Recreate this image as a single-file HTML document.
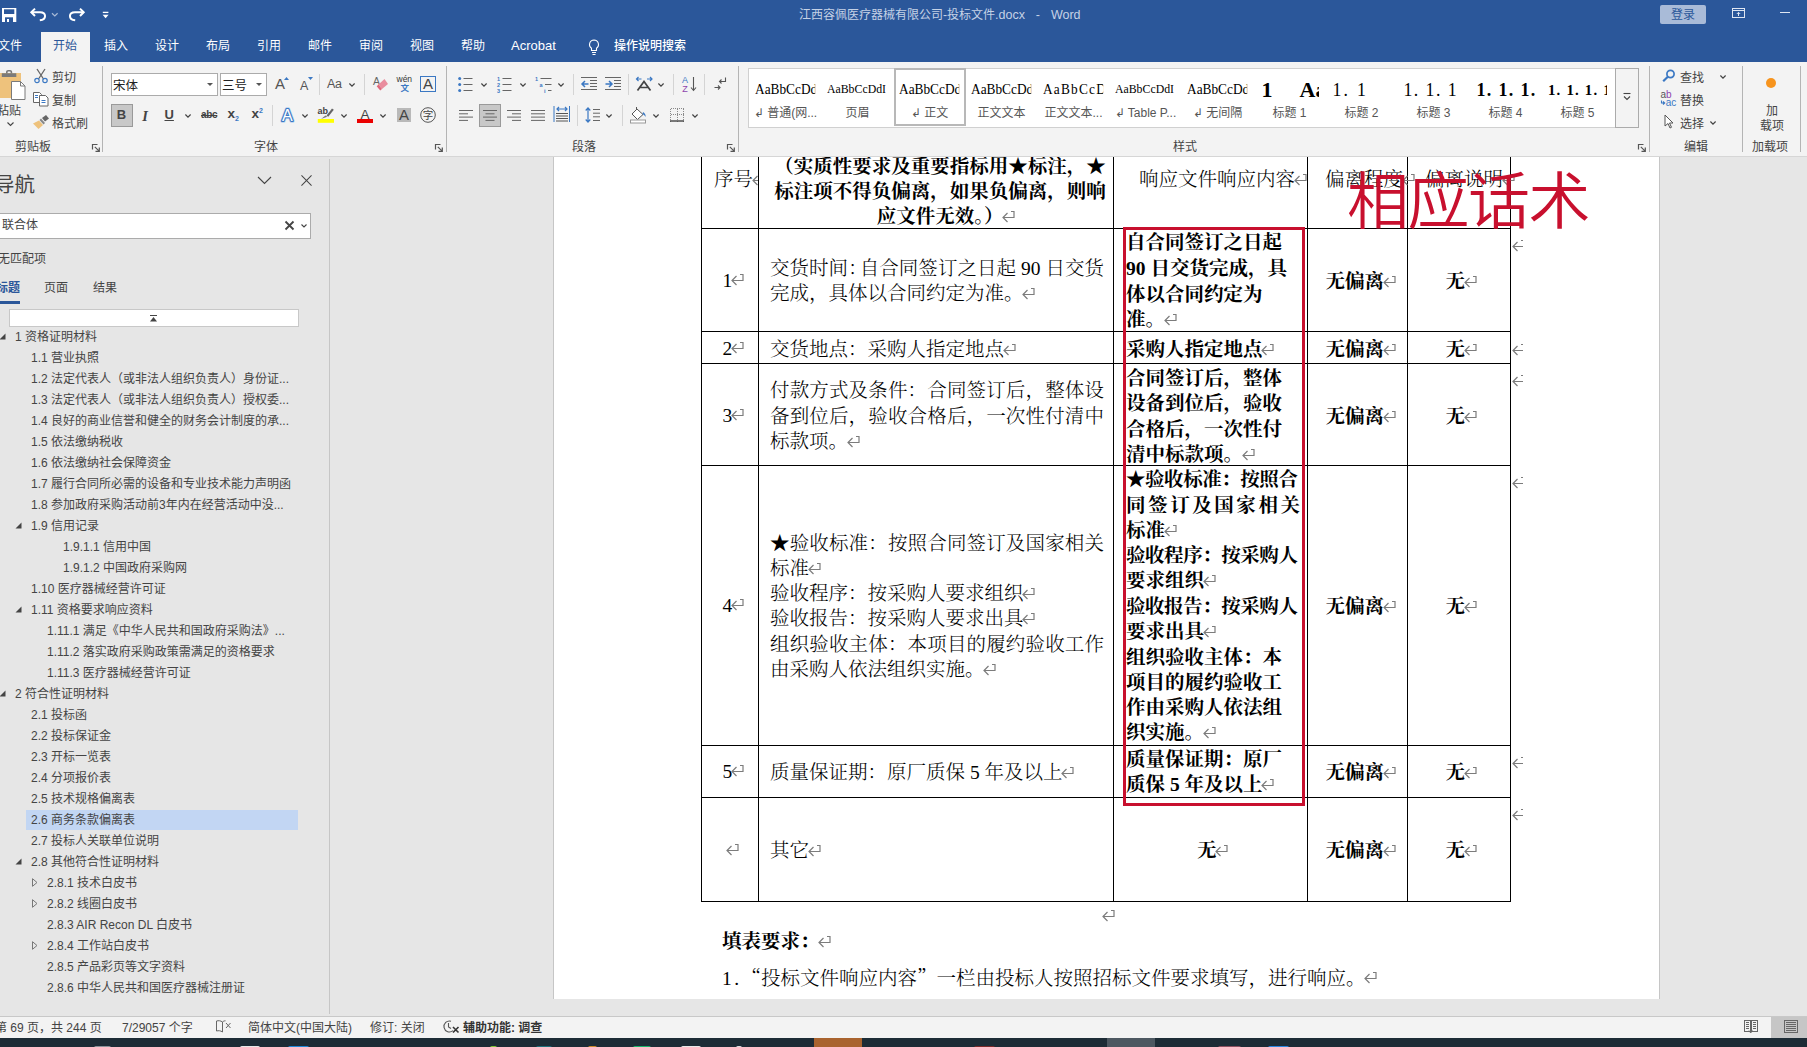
<!DOCTYPE html>
<html lang="zh-CN"><head><meta charset="utf-8"><title>Word</title>
<style>
*{box-sizing:border-box;margin:0;padding:0}
html,body{width:1807px;height:1047px;overflow:hidden;background:#e6e6e6}
body{position:relative;font-family:"Liberation Sans","Noto Sans CJK SC",sans-serif;font-size:12px;color:#444;}
.a{position:absolute;white-space:nowrap}
.t{position:absolute;white-space:nowrap;line-height:22px;height:20px}
#title{left:0;top:0;width:1807px;height:62px;background:#2b579a}
.tab{color:#fff;font-size:12px;top:35px}
#ribbon{left:0;top:62px;width:1807px;height:95px;background:#f3f3f3;border-bottom:1px solid #d6d6d6}
.rl{color:#444;font-size:12px;margin-top:1px}
.sep{position:absolute;width:1px;background:#b4b4b4}
.sep2{position:absolute;width:1px;background:#d4d4d4}
svg{position:absolute;overflow:visible}
.nav{font-size:12px;color:#444}
.doc{font-family:"Liberation Serif","Noto Serif CJK SC",serif;color:#000;font-weight:300;font-size:19.5px;line-height:26px;height:26px;position:absolute;white-space:nowrap}
.b{font-weight:700}
.pm{position:static;display:inline-block;vertical-align:0.500px;margin-left:-1.500px}
.hl{position:absolute;background:#000;height:1px}
.vl{position:absolute;background:#000;width:1px}
</style></head><body>

<div class="a" id="title"></div>
<svg style="left:0;top:0" width="120" height="30" viewBox="0 0 120 30" fill="none" stroke="#fff" stroke-width="2">
<rect x="2" y="8" width="14.300" height="14" fill="#fff" stroke="none"/><rect x="4" y="9.300" width="10.300" height="4.700" fill="#2b579a" stroke="none"/><rect x="5" y="17.300" width="8" height="4.700" fill="#2b579a" stroke="none"/><rect x="7" y="19" width="2" height="3" fill="#fff" stroke="none"/>
<path d="M31.500 12.300H40C46.500 12.300 47 19.500 39.800 20.300"/><path d="M35 8.600l-3.700 3.700l3.700 3.700"/>
<path d="M52 13.300l2.800 2.700l2.800-2.700" stroke="#a9bbd8" stroke-width="1.200"/>
<path d="M83.500 12.300H75C68.500 12.300 68 19.500 75.200 20.300"/><path d="M80 8.600l3.700 3.700l-3.700 3.700"/>
<path d="M102.800 12.400h5.600" stroke-width="1.300"/><path d="M102.600 14.800h6l-3 3.400z" fill="#fff" stroke="none"/>
</svg>
<div class="t" style="left:799px;top:4px;color:#c5d2e6;font-size:12px">江西容佩医疗器械有限公司-投标文件<span style="font-size:12.500px;word-spacing:2px">.docx&nbsp; - &nbsp;Word</span></div>
<div class="a" style="left:1660px;top:5px;width:46px;height:19px;border-radius:2px;background:#a9bbd8"></div>
<div class="t" style="left:1660px;top:4px;width:46px;text-align:center;color:#2b579a;font-size:12px">登录</div>
<svg style="left:1732px;top:8px" width="13" height="10" viewBox="0 0 13 10" fill="none" stroke="#dfe6f2" stroke-width="1"><path d="M0.500 0.500h12v9h-12z M0.500 2.500h12" shape-rendering="crispEdges"/><path d="M6.500 8v-3.500 M4.800 6l1.700-1.700l1.700 1.700"/></svg>
<div class="a" style="left:1780px;top:12px;width:10px;height:1px;background:#dfe6f2"></div>
<div class="a" style="left:41px;top:32px;width:49px;height:30px;background:#f3f3f3"></div>
<div class="t tab" style="left:-2px;color:#fff">文件</div>
<div class="t tab" style="left:53px;color:#2b579a">开始</div>
<div class="t tab" style="left:104px;color:#fff">插入</div>
<div class="t tab" style="left:155px;color:#fff">设计</div>
<div class="t tab" style="left:206px;color:#fff">布局</div>
<div class="t tab" style="left:257px;color:#fff">引用</div>
<div class="t tab" style="left:308px;color:#fff">邮件</div>
<div class="t tab" style="left:359px;color:#fff">审阅</div>
<div class="t tab" style="left:410px;color:#fff">视图</div>
<div class="t tab" style="left:461px;color:#fff">帮助</div>
<div class="t tab" style="left:511px;color:#fff"><span style="font-size:13px">Acrobat</span></div>
<svg style="left:588px;top:39px" width="12" height="17" viewBox="0 0 12 17" fill="none" stroke="#fff" stroke-width="1.1"><path d="M6 1a4.500 4.500 0 0 0-2.500 8.200v2.300h5v-2.300a4.500 4.500 0 0 0-2.500-8.200z M4 13.500h4 M4.500 15.500h3"/></svg>
<div class="t tab" style="left:614px;font-weight:500">操作说明搜索</div><div class="a" style="left:553px;top:157px;width:1107px;height:842px;background:#fff;border-left:1px solid #c6c6c6;border-right:1px solid #c6c6c6"></div>
<div class="vl" style="left:701px;top:157px;height:745px"></div>
<div class="vl" style="left:758px;top:157px;height:745px"></div>
<div class="vl" style="left:1113px;top:157px;height:745px"></div>
<div class="vl" style="left:1307px;top:157px;height:745px"></div>
<div class="vl" style="left:1407px;top:157px;height:745px"></div>
<div class="vl" style="left:1510px;top:157px;height:745px"></div>
<div class="hl" style="left:701px;top:228px;width:810px"></div>
<div class="hl" style="left:701px;top:331px;width:810px"></div>
<div class="hl" style="left:701px;top:363px;width:810px"></div>
<div class="hl" style="left:701px;top:465px;width:810px"></div>
<div class="hl" style="left:701px;top:745px;width:810px"></div>
<div class="hl" style="left:701px;top:797px;width:810px"></div>
<div class="hl" style="left:701px;top:901px;width:810px"></div>
<div class="doc" style="left:714px;top:167px;width:44px;overflow:hidden">序号<svg class="pm" width="13" height="12" viewBox="0 0 13 12" fill="none" stroke="#7c7c7c" stroke-width="1.200"><path d="M9 0.500h3v6h-11"/><path d="M5.500 2l-4.500 4.500l4.500 4.500"/></svg></div>
<div class="doc b" style="left:763px;top:154px;width:354px;text-align:center;">（实质性要求及重要指标用★标注，★</div>
<div class="doc b" style="left:763px;top:179px;width:354px;text-align:center;">标注项不得负偏离，如果负偏离，则响</div>
<div class="doc b" style="left:769px;top:204px;width:354px;text-align:center;">应文件无效。）<svg class="pm" width="13" height="12" viewBox="0 0 13 12" fill="none" stroke="#7c7c7c" stroke-width="1.200"><path d="M9 0.500h3v6h-11"/><path d="M5.500 2l-4.500 4.500l4.500 4.500"/></svg></div>
<div class="doc" style="left:1139px;top:167px;">响应文件响应内容<svg class="pm" width="13" height="12" viewBox="0 0 13 12" fill="none" stroke="#7c7c7c" stroke-width="1.200"><path d="M9 0.500h3v6h-11"/><path d="M5.500 2l-4.500 4.500l4.500 4.500"/></svg></div>
<div class="doc" style="left:1325px;top:167px;">偏离程度<svg class="pm" width="13" height="12" viewBox="0 0 13 12" fill="none" stroke="#7c7c7c" stroke-width="1.200"><path d="M9 0.500h3v6h-11"/><path d="M5.500 2l-4.500 4.500l4.500 4.500"/></svg></div>
<div class="doc" style="left:1425px;top:167px;">偏离说明<svg class="pm" width="13" height="12" viewBox="0 0 13 12" fill="none" stroke="#7c7c7c" stroke-width="1.200"><path d="M9 0.500h3v6h-11"/><path d="M5.500 2l-4.500 4.500l4.500 4.500"/></svg></div>
<div class="doc" style="left:705px;top:267.5px;width:56px;text-align:center;">1<svg class="pm" width="13" height="12" viewBox="0 0 13 12" fill="none" stroke="#7c7c7c" stroke-width="1.200"><path d="M9 0.500h3v6h-11"/><path d="M5.500 2l-4.500 4.500l4.500 4.500"/></svg></div>
<div class="doc" style="left:705px;top:335.5px;width:56px;text-align:center;">2<svg class="pm" width="13" height="12" viewBox="0 0 13 12" fill="none" stroke="#7c7c7c" stroke-width="1.200"><path d="M9 0.500h3v6h-11"/><path d="M5.500 2l-4.500 4.500l4.500 4.500"/></svg></div>
<div class="doc" style="left:705px;top:402.5px;width:56px;text-align:center;">3<svg class="pm" width="13" height="12" viewBox="0 0 13 12" fill="none" stroke="#7c7c7c" stroke-width="1.200"><path d="M9 0.500h3v6h-11"/><path d="M5.500 2l-4.500 4.500l4.500 4.500"/></svg></div>
<div class="doc" style="left:705px;top:592.5px;width:56px;text-align:center;">4<svg class="pm" width="13" height="12" viewBox="0 0 13 12" fill="none" stroke="#7c7c7c" stroke-width="1.200"><path d="M9 0.500h3v6h-11"/><path d="M5.500 2l-4.500 4.500l4.500 4.500"/></svg></div>
<div class="doc" style="left:705px;top:758.5px;width:56px;text-align:center;">5<svg class="pm" width="13" height="12" viewBox="0 0 13 12" fill="none" stroke="#7c7c7c" stroke-width="1.200"><path d="M9 0.500h3v6h-11"/><path d="M5.500 2l-4.500 4.500l4.500 4.500"/></svg></div>
<div class="doc" style="left:705px;top:837px;width:56px;text-align:center;"><svg class="pm" width="13" height="12" viewBox="0 0 13 12" fill="none" stroke="#7c7c7c" stroke-width="1.200"><path d="M9 0.500h3v6h-11"/><path d="M5.500 2l-4.500 4.500l4.500 4.500"/></svg></div>
<div class="doc" style="left:770px;top:256px;width:334px;text-align:justify;text-align-last:justify;">交货时间<span style="margin-right:-8px">：</span>自合同签订之日起 90 日交货</div>
<div class="doc" style="left:770px;top:281px;">完成，具体以合同约定为准。<svg class="pm" width="13" height="12" viewBox="0 0 13 12" fill="none" stroke="#7c7c7c" stroke-width="1.200"><path d="M9 0.500h3v6h-11"/><path d="M5.500 2l-4.500 4.500l4.500 4.500"/></svg></div>
<div class="doc" style="left:770px;top:337px;">交货地点：采购人指定地点<svg class="pm" width="13" height="12" viewBox="0 0 13 12" fill="none" stroke="#7c7c7c" stroke-width="1.200"><path d="M9 0.500h3v6h-11"/><path d="M5.500 2l-4.500 4.500l4.500 4.500"/></svg></div>
<div class="doc" style="left:770px;top:378px;width:334px;text-align:justify;text-align-last:justify;">付款方式及条件：合同签订后，整体设</div>
<div class="doc" style="left:770px;top:404px;width:334px;text-align:justify;text-align-last:justify;">备到位后，验收合格后，一次性付清中</div>
<div class="doc" style="left:770px;top:429px;">标款项。<svg class="pm" width="13" height="12" viewBox="0 0 13 12" fill="none" stroke="#7c7c7c" stroke-width="1.200"><path d="M9 0.500h3v6h-11"/><path d="M5.500 2l-4.500 4.500l4.500 4.500"/></svg></div>
<div class="doc" style="left:770px;top:531px;width:334px;text-align:justify;text-align-last:justify;">★验收标准：按照合同签订及国家相关</div>
<div class="doc" style="left:770px;top:556px;">标准<svg class="pm" width="13" height="12" viewBox="0 0 13 12" fill="none" stroke="#7c7c7c" stroke-width="1.200"><path d="M9 0.500h3v6h-11"/><path d="M5.500 2l-4.500 4.500l4.500 4.500"/></svg></div>
<div class="doc" style="left:770px;top:581px;">验收程序：按采购人要求组织<svg class="pm" width="13" height="12" viewBox="0 0 13 12" fill="none" stroke="#7c7c7c" stroke-width="1.200"><path d="M9 0.500h3v6h-11"/><path d="M5.500 2l-4.500 4.500l4.500 4.500"/></svg></div>
<div class="doc" style="left:770px;top:606px;">验收报告：按采购人要求出具<svg class="pm" width="13" height="12" viewBox="0 0 13 12" fill="none" stroke="#7c7c7c" stroke-width="1.200"><path d="M9 0.500h3v6h-11"/><path d="M5.500 2l-4.500 4.500l4.500 4.500"/></svg></div>
<div class="doc" style="left:770px;top:632px;width:334px;text-align:justify;text-align-last:justify;">组织验收主体：本项目的履约验收工作</div>
<div class="doc" style="left:770px;top:657px;">由采购人依法组织实施。<svg class="pm" width="13" height="12" viewBox="0 0 13 12" fill="none" stroke="#7c7c7c" stroke-width="1.200"><path d="M9 0.500h3v6h-11"/><path d="M5.500 2l-4.500 4.500l4.500 4.500"/></svg></div>
<div class="doc" style="left:770px;top:760px;">质量保证期：原厂质保 5 年及以上<svg class="pm" width="13" height="12" viewBox="0 0 13 12" fill="none" stroke="#7c7c7c" stroke-width="1.200"><path d="M9 0.500h3v6h-11"/><path d="M5.500 2l-4.500 4.500l4.500 4.500"/></svg></div>
<div class="doc" style="left:770px;top:838px;">其它<svg class="pm" width="13" height="12" viewBox="0 0 13 12" fill="none" stroke="#7c7c7c" stroke-width="1.200"><path d="M9 0.500h3v6h-11"/><path d="M5.500 2l-4.500 4.500l4.500 4.500"/></svg></div>
<div class="doc b" style="left:1126px;top:230px;">自合同签订之日起</div>
<div class="doc b" style="left:1126px;top:256px;">90 日交货完成，具</div>
<div class="doc b" style="left:1126px;top:282px;">体以合同约定为</div>
<div class="doc b" style="left:1126px;top:307px;">准。<svg class="pm" width="13" height="12" viewBox="0 0 13 12" fill="none" stroke="#7c7c7c" stroke-width="1.200"><path d="M9 0.500h3v6h-11"/><path d="M5.500 2l-4.500 4.500l4.500 4.500"/></svg></div>
<div class="doc b" style="left:1126px;top:337px;">采购人指定地点<svg class="pm" width="13" height="12" viewBox="0 0 13 12" fill="none" stroke="#7c7c7c" stroke-width="1.200"><path d="M9 0.500h3v6h-11"/><path d="M5.500 2l-4.500 4.500l4.500 4.500"/></svg></div>
<div class="doc b" style="left:1126px;top:366px;">合同签订后，整体</div>
<div class="doc b" style="left:1126px;top:391px;">设备到位后，验收</div>
<div class="doc b" style="left:1126px;top:417px;">合格后，一次性付</div>
<div class="doc b" style="left:1126px;top:442px;">清中标款项。<svg class="pm" width="13" height="12" viewBox="0 0 13 12" fill="none" stroke="#7c7c7c" stroke-width="1.200"><path d="M9 0.500h3v6h-11"/><path d="M5.500 2l-4.500 4.500l4.500 4.500"/></svg></div>
<div class="doc b" style="left:1126px;top:467px;letter-spacing:-0.45px;">★验收标准：按照合</div>
<div class="doc b" style="left:1126px;top:493px;width:174px;text-align:justify;text-align-last:justify;">同签订及国家相关</div>
<div class="doc b" style="left:1126px;top:518px;">标准<svg class="pm" width="13" height="12" viewBox="0 0 13 12" fill="none" stroke="#7c7c7c" stroke-width="1.200"><path d="M9 0.500h3v6h-11"/><path d="M5.500 2l-4.500 4.500l4.500 4.500"/></svg></div>
<div class="doc b" style="left:1126px;top:543px;letter-spacing:-0.45px;">验收程序：按采购人</div>
<div class="doc b" style="left:1126px;top:568px;">要求组织<svg class="pm" width="13" height="12" viewBox="0 0 13 12" fill="none" stroke="#7c7c7c" stroke-width="1.200"><path d="M9 0.500h3v6h-11"/><path d="M5.500 2l-4.500 4.500l4.500 4.500"/></svg></div>
<div class="doc b" style="left:1126px;top:594px;letter-spacing:-0.45px;">验收报告：按采购人</div>
<div class="doc b" style="left:1126px;top:619px;">要求出具<svg class="pm" width="13" height="12" viewBox="0 0 13 12" fill="none" stroke="#7c7c7c" stroke-width="1.200"><path d="M9 0.500h3v6h-11"/><path d="M5.500 2l-4.500 4.500l4.500 4.500"/></svg></div>
<div class="doc b" style="left:1126px;top:645px;">组织验收主体：本</div>
<div class="doc b" style="left:1126px;top:670px;">项目的履约验收工</div>
<div class="doc b" style="left:1126px;top:695px;">作由采购人依法组</div>
<div class="doc b" style="left:1126px;top:720px;">织实施。<svg class="pm" width="13" height="12" viewBox="0 0 13 12" fill="none" stroke="#7c7c7c" stroke-width="1.200"><path d="M9 0.500h3v6h-11"/><path d="M5.500 2l-4.500 4.500l4.500 4.500"/></svg></div>
<div class="doc b" style="left:1126px;top:747px;">质量保证期：原厂</div>
<div class="doc b" style="left:1126px;top:772px;">质保 5 年及以上<svg class="pm" width="13" height="12" viewBox="0 0 13 12" fill="none" stroke="#7c7c7c" stroke-width="1.200"><path d="M9 0.500h3v6h-11"/><path d="M5.500 2l-4.500 4.500l4.500 4.500"/></svg></div>
<div class="doc b" style="left:1116px;top:838px;width:193px;text-align:center;">无<svg class="pm" width="13" height="12" viewBox="0 0 13 12" fill="none" stroke="#7c7c7c" stroke-width="1.200"><path d="M9 0.500h3v6h-11"/><path d="M5.500 2l-4.500 4.500l4.500 4.500"/></svg></div>
<div class="doc b" style="left:1311px;top:269px;width:99px;text-align:center;">无偏离<svg class="pm" width="13" height="12" viewBox="0 0 13 12" fill="none" stroke="#7c7c7c" stroke-width="1.200"><path d="M9 0.500h3v6h-11"/><path d="M5.500 2l-4.500 4.500l4.500 4.500"/></svg></div>
<div class="doc b" style="left:1410px;top:269px;width:102px;text-align:center;">无<svg class="pm" width="13" height="12" viewBox="0 0 13 12" fill="none" stroke="#7c7c7c" stroke-width="1.200"><path d="M9 0.500h3v6h-11"/><path d="M5.500 2l-4.500 4.500l4.500 4.500"/></svg></div>
<div class="doc b" style="left:1311px;top:337px;width:99px;text-align:center;">无偏离<svg class="pm" width="13" height="12" viewBox="0 0 13 12" fill="none" stroke="#7c7c7c" stroke-width="1.200"><path d="M9 0.500h3v6h-11"/><path d="M5.500 2l-4.500 4.500l4.500 4.500"/></svg></div>
<div class="doc b" style="left:1410px;top:337px;width:102px;text-align:center;">无<svg class="pm" width="13" height="12" viewBox="0 0 13 12" fill="none" stroke="#7c7c7c" stroke-width="1.200"><path d="M9 0.500h3v6h-11"/><path d="M5.500 2l-4.500 4.500l4.500 4.500"/></svg></div>
<div class="doc b" style="left:1311px;top:404px;width:99px;text-align:center;">无偏离<svg class="pm" width="13" height="12" viewBox="0 0 13 12" fill="none" stroke="#7c7c7c" stroke-width="1.200"><path d="M9 0.500h3v6h-11"/><path d="M5.500 2l-4.500 4.500l4.500 4.500"/></svg></div>
<div class="doc b" style="left:1410px;top:404px;width:102px;text-align:center;">无<svg class="pm" width="13" height="12" viewBox="0 0 13 12" fill="none" stroke="#7c7c7c" stroke-width="1.200"><path d="M9 0.500h3v6h-11"/><path d="M5.500 2l-4.500 4.500l4.500 4.500"/></svg></div>
<div class="doc b" style="left:1311px;top:594px;width:99px;text-align:center;">无偏离<svg class="pm" width="13" height="12" viewBox="0 0 13 12" fill="none" stroke="#7c7c7c" stroke-width="1.200"><path d="M9 0.500h3v6h-11"/><path d="M5.500 2l-4.500 4.500l4.500 4.500"/></svg></div>
<div class="doc b" style="left:1410px;top:594px;width:102px;text-align:center;">无<svg class="pm" width="13" height="12" viewBox="0 0 13 12" fill="none" stroke="#7c7c7c" stroke-width="1.200"><path d="M9 0.500h3v6h-11"/><path d="M5.500 2l-4.500 4.500l4.500 4.500"/></svg></div>
<div class="doc b" style="left:1311px;top:760px;width:99px;text-align:center;">无偏离<svg class="pm" width="13" height="12" viewBox="0 0 13 12" fill="none" stroke="#7c7c7c" stroke-width="1.200"><path d="M9 0.500h3v6h-11"/><path d="M5.500 2l-4.500 4.500l4.500 4.500"/></svg></div>
<div class="doc b" style="left:1410px;top:760px;width:102px;text-align:center;">无<svg class="pm" width="13" height="12" viewBox="0 0 13 12" fill="none" stroke="#7c7c7c" stroke-width="1.200"><path d="M9 0.500h3v6h-11"/><path d="M5.500 2l-4.500 4.500l4.500 4.500"/></svg></div>
<div class="doc b" style="left:1311px;top:838px;width:99px;text-align:center;">无偏离<svg class="pm" width="13" height="12" viewBox="0 0 13 12" fill="none" stroke="#7c7c7c" stroke-width="1.200"><path d="M9 0.500h3v6h-11"/><path d="M5.500 2l-4.500 4.500l4.500 4.500"/></svg></div>
<div class="doc b" style="left:1410px;top:838px;width:102px;text-align:center;">无<svg class="pm" width="13" height="12" viewBox="0 0 13 12" fill="none" stroke="#7c7c7c" stroke-width="1.200"><path d="M9 0.500h3v6h-11"/><path d="M5.500 2l-4.500 4.500l4.500 4.500"/></svg></div>
<div class="doc" style="left:1512px;top:233px;width:11px;padding-left:1.500px;overflow:hidden"><svg class="pm" width="13" height="12" viewBox="0 0 13 12" fill="none" stroke="#7c7c7c" stroke-width="1.200"><path d="M9 0.500h3v6h-11"/><path d="M5.500 2l-4.500 4.500l4.500 4.500"/></svg></div>
<div class="doc" style="left:1512px;top:337px;width:11px;padding-left:1.500px;overflow:hidden"><svg class="pm" width="13" height="12" viewBox="0 0 13 12" fill="none" stroke="#7c7c7c" stroke-width="1.200"><path d="M9 0.500h3v6h-11"/><path d="M5.500 2l-4.500 4.500l4.500 4.500"/></svg></div>
<div class="doc" style="left:1512px;top:368px;width:11px;padding-left:1.500px;overflow:hidden"><svg class="pm" width="13" height="12" viewBox="0 0 13 12" fill="none" stroke="#7c7c7c" stroke-width="1.200"><path d="M9 0.500h3v6h-11"/><path d="M5.500 2l-4.500 4.500l4.500 4.500"/></svg></div>
<div class="doc" style="left:1512px;top:470px;width:11px;padding-left:1.500px;overflow:hidden"><svg class="pm" width="13" height="12" viewBox="0 0 13 12" fill="none" stroke="#7c7c7c" stroke-width="1.200"><path d="M9 0.500h3v6h-11"/><path d="M5.500 2l-4.500 4.500l4.500 4.500"/></svg></div>
<div class="doc" style="left:1512px;top:750px;width:11px;padding-left:1.500px;overflow:hidden"><svg class="pm" width="13" height="12" viewBox="0 0 13 12" fill="none" stroke="#7c7c7c" stroke-width="1.200"><path d="M9 0.500h3v6h-11"/><path d="M5.500 2l-4.500 4.500l4.500 4.500"/></svg></div>
<div class="doc" style="left:1512px;top:802px;width:11px;padding-left:1.500px;overflow:hidden"><svg class="pm" width="13" height="12" viewBox="0 0 13 12" fill="none" stroke="#7c7c7c" stroke-width="1.200"><path d="M9 0.500h3v6h-11"/><path d="M5.500 2l-4.500 4.500l4.500 4.500"/></svg></div>
<div class="doc" style="left:1103px;top:903px"><svg class="pm" width="13" height="12" viewBox="0 0 13 12" fill="none" stroke="#7c7c7c" stroke-width="1.200"><path d="M9 0.500h3v6h-11"/><path d="M5.500 2l-4.500 4.500l4.500 4.500"/></svg></div>
<div class="doc b" style="left:722px;top:929px;">填表要求：<svg class="pm" width="13" height="12" viewBox="0 0 13 12" fill="none" stroke="#7c7c7c" stroke-width="1.200"><path d="M9 0.500h3v6h-11"/><path d="M5.500 2l-4.500 4.500l4.500 4.500"/></svg></div>
<div class="doc" style="left:722px;top:965.5px;"><span style="letter-spacing:2.400px">1.</span><span style="line-height:0;font-family:'Noto Serif CJK SC',serif">“</span>投标文件响应内容<span style="line-height:0;font-family:'Noto Serif CJK SC',serif">”</span>一栏由投标人按照招标文件要求填写，进行响应。<svg class="pm" width="13" height="12" viewBox="0 0 13 12" fill="none" stroke="#7c7c7c" stroke-width="1.200"><path d="M9 0.500h3v6h-11"/><path d="M5.500 2l-4.500 4.500l4.500 4.500"/></svg></div>
<div class="a" style="left:1123px;top:227px;width:182px;height:579px;border:3px solid #c8102e"></div>
<div class="a" style="left:1347px;top:157px;font-size:62px;letter-spacing:-1.500px;line-height:80px;height:80px;color:#c8102e;font-family:'Noto Sans CJK SC',sans-serif;font-weight:350">相应话术</div><div class="a" id="ribbon"></div>
<div class="sep" style="left:102px;top:66px;height:86px"></div>
<div class="sep" style="left:446px;top:66px;height:86px"></div>
<div class="sep" style="left:738px;top:66px;height:86px"></div>
<div class="sep" style="left:1649px;top:66px;height:86px"></div>
<div class="sep" style="left:1742px;top:66px;height:86px"></div>
<div class="sep" style="left:1800px;top:66px;height:86px"></div>
<div class="t rl" style="left:15px;top:135px">剪贴板</div>
<div class="t rl" style="left:254px;top:135px">字体</div>
<div class="t rl" style="left:572px;top:135px">段落</div>
<div class="t rl" style="left:1173px;top:135px">样式</div>
<div class="t rl" style="left:1684px;top:135px">编辑</div>
<div class="t rl" style="left:1752px;top:135px">加载项</div>
<svg style="left:92px;top:144px" width="8" height="8" viewBox="0 0 8 8" fill="none" stroke="#555" stroke-width="1.200"><path d="M0.500 5.500v-5h5"/><path d="M2.800 2.800l4.400 4.400 M7.300 3.500v3.800h-3.800"/></svg>
<svg style="left:435px;top:144px" width="8" height="8" viewBox="0 0 8 8" fill="none" stroke="#555" stroke-width="1.200"><path d="M0.500 5.500v-5h5"/><path d="M2.800 2.800l4.400 4.400 M7.300 3.500v3.800h-3.800"/></svg>
<svg style="left:727px;top:144px" width="8" height="8" viewBox="0 0 8 8" fill="none" stroke="#555" stroke-width="1.200"><path d="M0.500 5.500v-5h5"/><path d="M2.800 2.800l4.400 4.400 M7.300 3.500v3.800h-3.800"/></svg>
<svg style="left:1638px;top:144px" width="8" height="8" viewBox="0 0 8 8" fill="none" stroke="#555" stroke-width="1.200"><path d="M0.500 5.500v-5h5"/><path d="M2.800 2.800l4.400 4.400 M7.300 3.500v3.800h-3.800"/></svg>
<svg style="left:0;top:69px" width="26" height="32" viewBox="0 0 26 32">
<path d="M-4 4h25v25h-25z" fill="#eec27c"/><path d="M6.800 4.500v-1.500a1.300 1.300 0 0 1 1.300-1.300h2a1.300 1.300 0 0 1 1.300 1.300v1.500" fill="none" stroke="#7a7a7a" stroke-width="1.600"/><path d="M1.800 4.300h14.500v3.700h-14.500z" fill="#7a7a7a"/>
<path d="M11.500 12.500h9l4.500 4.500v13.500h-13.500z" fill="#fff" stroke="#7a7a7a" stroke-width="1"/><path d="M20.500 12.500v4.500h4.500" fill="none" stroke="#7a7a7a" stroke-width="1"/></svg>
<div class="t rl" style="left:-3px;top:99px">粘贴</div>
<svg style="left:7px;top:122px" width="7" height="4" viewBox="0 0 7 4" fill="none" stroke="#444" stroke-width="1.1"><path d="M0.500 0.500l3 3l3-3"/></svg>
<svg style="left:33px;top:68px" width="16" height="16" viewBox="0 0 16 16" fill="none"><path d="M4 1l6.500 10 M12 1l-6.500 10" stroke="#666" stroke-width="1.3"/><circle cx="4" cy="12.500" r="2.200" stroke="#3b78c3" stroke-width="1.200"/><circle cx="12" cy="12.500" r="2.200" stroke="#3b78c3" stroke-width="1.200"/></svg>
<div class="t rl" style="left:52px;top:66px">剪切</div>
<svg style="left:33px;top:91px" width="16" height="16" viewBox="0 0 16 16" fill="#fff" stroke="#666" stroke-width="1"><path d="M0.500 1.500h6l2 2v8h-8z"/><path d="M6.500 4.500h6l2.500 2.500v8h-8.500z"/><path d="M8.500 9.500h4 M8.500 11.500h4 M2 4.500h3 M2 6.500h3" stroke="#3b78c3"/></svg>
<div class="t rl" style="left:52px;top:89px">复制</div>
<svg style="left:33px;top:114px" width="17" height="16" viewBox="0 0 17 16"><path d="M9 4l4-3l3 3.500l-4 3z" fill="#666"/><path d="M8 4.500l4 4.500l-1.500 1.500l-4-4.500z" fill="#888"/><path d="M6 6.500l4 4.500l-4.500 4l-5.500-5.500z" fill="#eec27c"/></svg>
<div class="t rl" style="left:52px;top:112px">格式刷</div>
<div class="a" style="left:111px;top:73px;width:107px;height:23px;background:#fff;border:1px solid #ababab"></div>
<div class="t" style="left:113px;top:75px;font-size:12.500px;color:#222">宋体</div>
<svg style="left:207px;top:83px" width="6" height="3" viewBox="0 0 6 3"><path d="M0 0h6l-3 3z" fill="#555"/></svg>
<div class="a" style="left:220px;top:73px;width:47px;height:23px;background:#fff;border:1px solid #ababab"></div>
<div class="t" style="left:222px;top:75px;font-size:12.500px;color:#222">三号</div>
<svg style="left:256px;top:83px" width="6" height="3" viewBox="0 0 6 3"><path d="M0 0h6l-3 3z" fill="#555"/></svg>
<div class="t" style="left:275px;top:73px;font-size:15px;color:#555">A</div><svg style="left:284px;top:77px" width="5" height="3" viewBox="0 0 5 3"><path d="M0 3h5l-2.500-3z" fill="#3b78c3"/></svg>
<div class="t" style="left:300px;top:75px;font-size:12.500px;color:#555">A</div><svg style="left:308px;top:77px" width="5" height="3" viewBox="0 0 5 3"><path d="M0 0h5l-2.500 3z" fill="#3b78c3"/></svg>
<div class="sep2" style="left:319px;top:74px;height:21px"></div>
<div class="t" style="left:327px;top:73px;font-size:12.500px;letter-spacing:-0.300px;color:#555">Aa</div>
<svg style="left:348.5px;top:83px" width="6" height="4" viewBox="0 0 6 4" fill="none" stroke="#444" stroke-width="1.200"><path d="M0.400 0.500l2.600 2.600l2.600-2.600"/></svg>
<div class="sep2" style="left:364px;top:74px;height:21px"></div>
<svg style="left:372px;top:76px" width="17" height="16" viewBox="0 0 17 16"><text x="1" y="9" font-family="Liberation Sans,sans-serif" font-size="10.500" fill="#666">A</text><path d="M12.500 3l3.500 5l-6 5l-3.500-4.500z" fill="#e98d9e"/><path d="M6.500 8.500l3.500 4.500l-1.800 1.500l-3.500-4.300z" fill="#e0677c"/></svg>
<div class="t" style="left:396.500px;top:73px;font-size:8.500px;color:#333;line-height:12px;height:12px">wén</div><div class="t" style="left:400.500px;top:81px;font-size:8.500px;font-weight:700;color:#3b78c3;line-height:14px;height:14px">文</div>
<div class="a" style="left:420px;top:76px;width:16px;height:16px;border:1px solid #3b78c3"></div><div class="t" style="left:420px;top:73px;width:16px;text-align:center;font-size:15px;color:#444">A</div>
<div class="a" style="left:111px;top:104px;width:22px;height:23px;background:#c8c8c8;border:1px solid #9a9a9a"></div>
<div class="t" style="left:110.500px;top:104px;width:22px;text-align:center;font-size:13px;font-weight:700;color:#444">B</div>
<div class="t" style="left:140px;top:105px;width:10px;text-align:center;font-size:14.500px;font-style:italic;font-weight:700;color:#444;font-family:'Liberation Serif',serif">I</div>
<div class="t" style="left:164.500px;top:104px;font-size:13px;font-weight:700;color:#444;text-decoration:underline">U</div>
<svg style="left:184.5px;top:114px" width="6" height="4" viewBox="0 0 6 4" fill="none" stroke="#444" stroke-width="1.200"><path d="M0.400 0.500l2.600 2.600l2.600-2.600"/></svg>
<div class="t" style="left:201px;top:104px;font-size:10px;font-weight:700;letter-spacing:-0.300px;color:#444;text-decoration:line-through">abc</div>
<div class="t" style="left:227.500px;top:103px;font-size:13.500px;color:#444;font-weight:700">x<span style="font-size:7px;color:#3b78c3;position:relative;top:3px">2</span></div>
<div class="t" style="left:251.500px;top:103px;font-size:13.500px;color:#444;font-weight:700">x<span style="font-size:7px;color:#3b78c3;position:relative;top:-5px">2</span></div>
<div class="sep2" style="left:272px;top:105px;height:21px"></div>
<svg style="left:280px;top:105px" width="16" height="18" viewBox="0 0 16 18"><text x="2" y="15.500" font-family="Liberation Sans,sans-serif" font-size="16" fill="#b9d2ef" stroke="#b9d2ef" stroke-width="3.500" stroke-linejoin="round">A</text><text x="2" y="15.500" font-family="Liberation Sans,sans-serif" font-size="16" fill="#fff" stroke="#3b78c3" stroke-width="2.200" paint-order="stroke" stroke-linejoin="round">A</text></svg>
<svg style="left:301.5px;top:114px" width="6" height="4" viewBox="0 0 6 4" fill="none" stroke="#444" stroke-width="1.200"><path d="M0.400 0.500l2.600 2.600l2.600-2.600"/></svg>
<svg style="left:317px;top:105px" width="18" height="20" viewBox="0 0 18 20"><text x="0.500" y="9" font-family="Liberation Sans,sans-serif" font-size="9" font-weight="700" fill="#444">ab</text><path d="M9.500 10.500l5.500-7l1.800 1.300l-5.500 7z" fill="#666"/><path d="M4 14l4.500-3.500l1.800 1.300z" fill="#777"/><rect x="0.800" y="14" width="16.200" height="3.800" fill="#ffff00"/></svg>
<svg style="left:340.5px;top:114px" width="6" height="4" viewBox="0 0 6 4" fill="none" stroke="#444" stroke-width="1.200"><path d="M0.400 0.500l2.600 2.600l2.600-2.600"/></svg>
<div class="t" style="left:360.500px;top:104px;font-size:13.500px;color:#444">A</div><div class="a" style="left:357px;top:119px;width:16px;height:4px;background:#ea0000"></div>
<svg style="left:379.5px;top:114px" width="6" height="4" viewBox="0 0 6 4" fill="none" stroke="#444" stroke-width="1.200"><path d="M0.400 0.500l2.600 2.600l2.600-2.600"/></svg>
<div class="a" style="left:397px;top:108px;width:14px;height:14px;background:#b9b9b9"></div><div class="t" style="left:397px;top:104px;width:14px;text-align:center;font-size:15px;color:#444">A</div>
<svg style="left:420px;top:107px" width="16" height="16" viewBox="0 0 16 16"><circle cx="8" cy="8" r="7.300" fill="none" stroke="#555" stroke-width="1"/><text x="8" y="11.500" text-anchor="middle" font-family="Noto Sans CJK SC,sans-serif" font-size="10.500" fill="#444">字</text></svg><svg style="left:458px;top:76px" width="16" height="16" viewBox="0 0 16 16"><g fill="#3b78c3"><circle cx="1.700" cy="2.500" r="1.500"/><circle cx="1.700" cy="8.500" r="1.500"/><circle cx="1.700" cy="14.500" r="1.500"/></g><path d="M5.500 2.500h9 M5.500 8.500h9 M5.500 14.500h9" stroke="#666" stroke-width="1"/></svg>
<svg style="left:480.5px;top:83px" width="6" height="4" viewBox="0 0 6 4" fill="none" stroke="#444" stroke-width="1.200"><path d="M0.400 0.500l2.600 2.600l2.600-2.600"/></svg>
<svg style="left:497px;top:76px" width="16" height="16" viewBox="0 0 16 16"><g font-family="Liberation Sans,sans-serif" font-size="5.500" font-weight="700" fill="#3b78c3"><text x="0" y="4.500">1</text><text x="0" y="10.500">2</text><text x="0" y="16.500">3</text></g><path d="M5.500 2.500h9 M5.500 8.500h9 M5.500 14.500h9" stroke="#666" stroke-width="1"/></svg>
<svg style="left:519.5px;top:83px" width="6" height="4" viewBox="0 0 6 4" fill="none" stroke="#444" stroke-width="1.200"><path d="M0.400 0.500l2.600 2.600l2.600-2.600"/></svg>
<svg style="left:535px;top:76px" width="18" height="16" viewBox="0 0 18 16"><g font-family="Liberation Sans,sans-serif" font-size="5.500" font-weight="700" fill="#3b78c3"><text x="0" y="4.500">1</text><text x="4.500" y="10.500">a</text><text x="9" y="16.500">i</text></g><path d="M5.500 2.500h11 M10 8.500h6.500 M13 14.500h3.500" stroke="#666" stroke-width="1"/></svg>
<svg style="left:557.5px;top:83px" width="6" height="4" viewBox="0 0 6 4" fill="none" stroke="#444" stroke-width="1.200"><path d="M0.400 0.500l2.600 2.600l2.600-2.600"/></svg>
<div class="sep2" style="left:573px;top:74px;height:21px"></div>
<svg style="left:581px;top:77px" width="17" height="14" viewBox="0 0 17 14" fill="none"><path d="M0 0.500h16 M9 3.500h7 M9 6.500h7 M9 9.500h7 M0 12.500h16" stroke="#666" stroke-width="1"/><path d="M7.500 7h-6.500 M4 4l-3 3l3 3" stroke="#3b78c3" stroke-width="1.500"/></svg>
<svg style="left:605px;top:77px" width="17" height="14" viewBox="0 0 17 14" fill="none"><path d="M0 0.500h16 M9 3.500h7 M9 6.500h7 M9 9.500h7 M0 12.500h16" stroke="#666" stroke-width="1"/><path d="M0.500 7h6.500 M4 4l3 3l-3 3" stroke="#3b78c3" stroke-width="1.500"/></svg>
<div class="sep2" style="left:628px;top:74px;height:21px"></div>
<svg style="left:636px;top:76px" width="17" height="16" viewBox="0 0 17 16" fill="none"><path d="M0.500 3h5 M2.500 1l-2 2l2 2 M11 3h5 M14 1l2 2l-2 2" stroke="#3b78c3" stroke-width="1.200"/><path d="M1.500 14.500l6.500-9l6.500 9 M4 11.500h8" stroke="#444" stroke-width="1.700"/></svg>
<svg style="left:657.5px;top:83px" width="6" height="4" viewBox="0 0 6 4" fill="none" stroke="#444" stroke-width="1.200"><path d="M0.400 0.500l2.600 2.600l2.600-2.600"/></svg>
<div class="sep2" style="left:673px;top:74px;height:21px"></div>
<svg style="left:682px;top:75px" width="16" height="18" viewBox="0 0 16 18" fill="none"><text x="0" y="7.500" font-family="Liberation Sans,sans-serif" font-size="9" fill="#3b78c3" stroke="none">A</text><text x="0.300" y="16.500" font-family="Liberation Sans,sans-serif" font-size="9" fill="#8e44ad" stroke="none">Z</text><path d="M11.500 2v13.500 M9 12.500l2.500 3l2.500-3" stroke="#555" stroke-width="1.100"/></svg>
<div class="sep2" style="left:704px;top:74px;height:21px"></div>
<svg style="left:714px;top:77px" width="13" height="14" viewBox="0 0 13 14" fill="none" stroke="#555" stroke-width="1.100"><path d="M11.500 0.500v4h-6 M7.500 2.500l-2 2l2 2 M0.500 10.500h5.500 M4 8.500l2 2l-2 2"/></svg>
<svg style="left:459px;top:110px" width="15" height="11" viewBox="0 0 15 11"><path d="M0 0.5h14 M0 3.8h9 M0 7.1h14 M0 10.4h9 " stroke="#666" stroke-width="1" fill="none"/></svg>
<div class="a" style="left:479px;top:104px;width:22px;height:23px;background:#c8c8c8;border:1px solid #9a9a9a"></div>
<svg style="left:483px;top:110px" width="15" height="11" viewBox="0 0 15 11"><path d="M0 0.5h14 M2.5 3.8h9 M0 7.1h14 M2.5 10.4h9 " stroke="#666" stroke-width="1" fill="none"/></svg>
<svg style="left:507px;top:110px" width="15" height="11" viewBox="0 0 15 11"><path d="M0 0.5h14 M5 3.8h9 M0 7.1h14 M5 10.4h9 " stroke="#666" stroke-width="1" fill="none"/></svg>
<svg style="left:531px;top:110px" width="15" height="11" viewBox="0 0 15 11"><path d="M0 0.5h14 M0 3.8h14 M0 7.1h14 M0 10.4h14 " stroke="#666" stroke-width="1" fill="none"/></svg>
<svg style="left:553px;top:106px" width="18" height="17" viewBox="0 0 18 17" fill="none"><path d="M1 0v16 M16.500 0v16" stroke="#3b78c3" stroke-width="1"/><path d="M4 3h10 M6 1l-2 2l2 2 M12 1l2 2l-2 2" stroke="#3b78c3" stroke-width="1.200"/><path d="M3 7.500h12 M3 10h12 M3 12.500h12 M3 15h12" stroke="#555" stroke-width="1"/></svg>
<div class="sep2" style="left:577px;top:105px;height:21px"></div>
<svg style="left:585px;top:107px" width="16" height="16" viewBox="0 0 16 16" fill="none"><path d="M3 1v14 M0.700 3.500l2.300-2.500l2.300 2.500 M0.700 12.500l2.300 2.500l2.300-2.500" stroke="#3b78c3" stroke-width="1.200"/><path d="M8 2.500h7 M8 6.200h7 M8 9.800h7 M8 13.500h7" stroke="#666" stroke-width="1"/></svg>
<svg style="left:605.5px;top:114px" width="6" height="4" viewBox="0 0 6 4" fill="none" stroke="#444" stroke-width="1.200"><path d="M0.400 0.500l2.600 2.600l2.600-2.600"/></svg>
<div class="sep2" style="left:622px;top:105px;height:21px"></div>
<svg style="left:630px;top:106px" width="17" height="18" viewBox="0 0 17 18" fill="none"><path d="M6.500 1v4" stroke="#555" stroke-width="1"/><path d="M7 3l6 5.500l-5.500 5l-5.500-5.500z" fill="#fff" stroke="#555" stroke-width="1"/><path d="M13 6c2 1 3 3 2.500 5c-1-2-2-2.500-3-2.500z" fill="#3b78c3"/><rect x="0.500" y="14" width="15" height="3" fill="#fff" stroke="#999" stroke-width="1"/></svg>
<svg style="left:652.5px;top:114px" width="6" height="4" viewBox="0 0 6 4" fill="none" stroke="#444" stroke-width="1.200"><path d="M0.400 0.500l2.600 2.600l2.600-2.600"/></svg>
<svg style="left:670px;top:108px" width="14" height="14" viewBox="0 0 14 14" fill="none"><path d="M0.500 0.500h13 M0.500 0.500v13 M13.500 0.500v13 M7 0.500v13 M0.500 6.500h13" stroke="#8a8a8a" stroke-width="1" stroke-dasharray="1 1" shape-rendering="crispEdges"/><path d="M0 13h14" stroke="#444" stroke-width="1.400"/></svg>
<svg style="left:691.5px;top:114px" width="6" height="4" viewBox="0 0 6 4" fill="none" stroke="#444" stroke-width="1.200"><path d="M0.400 0.500l2.600 2.600l2.600-2.600"/></svg>
<div class="a" style="left:748px;top:68px;width:868px;height:60px;background:#fff;border:1px solid #d0d0d0"></div>
<div class="a" style="left:894px;top:68px;width:72px;height:58px;border:2px solid #b8b8b8;background:#fff"></div>
<div class="a" style="left:1615px;top:68px;width:24px;height:60px;border:1px solid #ababab;background:#f3f3f3"></div>
<svg style="left:1623px;top:93px" width="8" height="8" viewBox="0 0 8 8" fill="none" stroke="#444" stroke-width="1.100"><path d="M0.500 0.500h7"/><path d="M1 3.500l3 3l3-3" /></svg>
<div class="a" style="left:755px;top:74px;width:69.800px;height:30px;line-height:30px;overflow:hidden;transform:scaleX(0.86);transform-origin:0 0;font-size:15.5px;font-weight:400;letter-spacing:0px;color:#000;font-family:'Liberation Serif','Noto Serif CJK SC',serif">AaBbCcDdE</div>
<div class="t" style="left:749.5px;top:102px;width:72px;text-align:center;font-size:12px;color:#555">↲ 普通(网...</div>
<div class="a" style="left:827px;top:74px;width:60px;height:30px;line-height:30px;overflow:hidden;font-size:11.8px;font-weight:400;letter-spacing:0px;color:#000;font-family:'Liberation Serif','Noto Serif CJK SC',serif">AaBbCcDdI</div>
<div class="t" style="left:821.5px;top:102px;width:72px;text-align:center;font-size:12px;color:#555">页眉</div>
<div class="a" style="left:899px;top:74px;width:69.800px;height:30px;line-height:30px;overflow:hidden;transform:scaleX(0.86);transform-origin:0 0;font-size:15.5px;font-weight:400;letter-spacing:0px;color:#000;font-family:'Liberation Serif','Noto Serif CJK SC',serif">AaBbCcDdE</div>
<div class="t" style="left:893.5px;top:102px;width:72px;text-align:center;font-size:12px;color:#555">↲ 正文</div>
<div class="a" style="left:971px;top:74px;width:69.800px;height:30px;line-height:30px;overflow:hidden;transform:scaleX(0.86);transform-origin:0 0;font-size:15.5px;font-weight:400;letter-spacing:0px;color:#000;font-family:'Liberation Serif','Noto Serif CJK SC',serif">AaBbCcDdE</div>
<div class="t" style="left:965.5px;top:102px;width:72px;text-align:center;font-size:12px;color:#555">正文文本</div>
<div class="a" style="left:1043px;top:74px;width:69.800px;height:30px;line-height:30px;overflow:hidden;transform:scaleX(0.86);transform-origin:0 0;font-size:15.5px;font-weight:400;letter-spacing:1.4px;color:#000;font-family:'Liberation Serif','Noto Serif CJK SC',serif">AaBbCcDdE</div>
<div class="t" style="left:1037.5px;top:102px;width:72px;text-align:center;font-size:12px;color:#555">正文文本...</div>
<div class="a" style="left:1115px;top:74px;width:60px;height:30px;line-height:30px;overflow:hidden;font-size:11.8px;font-weight:400;letter-spacing:0px;color:#000;font-family:'Liberation Serif','Noto Serif CJK SC',serif">AaBbCcDdI</div>
<div class="t" style="left:1109.5px;top:102px;width:72px;text-align:center;font-size:12px;color:#555">↲ Table P...</div>
<div class="a" style="left:1187px;top:74px;width:69.800px;height:30px;line-height:30px;overflow:hidden;transform:scaleX(0.86);transform-origin:0 0;font-size:15.5px;font-weight:400;letter-spacing:0px;color:#000;font-family:'Liberation Serif','Noto Serif CJK SC',serif">AaBbCcDdE</div>
<div class="t" style="left:1181.5px;top:102px;width:72px;text-align:center;font-size:12px;color:#555">↲ 无间隔</div>
<div class="a" style="left:1259px;top:75px;width:60px;height:30px;line-height:30px;overflow:hidden;font-size:22px;font-weight:700;letter-spacing:0px;color:#000;padding-left:2.500px;font-family:'Liberation Serif','Noto Serif CJK SC',serif">1<span style="margin-left:27px">Aa</span></div>
<div class="t" style="left:1253.5px;top:102px;width:72px;text-align:center;font-size:12px;color:#555">标题 1</div>
<div class="a" style="left:1331px;top:75px;width:60px;height:30px;line-height:30px;overflow:hidden;font-size:17.8px;font-weight:400;letter-spacing:2.2px;color:#000;padding-left:1.500px;font-family:'Liberation Serif','Noto Serif CJK SC',serif">1. 1</div>
<div class="t" style="left:1325.5px;top:102px;width:72px;text-align:center;font-size:12px;color:#555">标题 2</div>
<div class="a" style="left:1403px;top:75px;width:60px;height:30px;line-height:30px;overflow:hidden;font-size:17.8px;font-weight:400;letter-spacing:1.43px;color:#000;padding-left:0.500px;font-family:'Liberation Serif','Noto Serif CJK SC',serif">1. 1. 1</div>
<div class="t" style="left:1397.5px;top:102px;width:72px;text-align:center;font-size:12px;color:#555">标题 3</div>
<div class="a" style="left:1475px;top:75px;width:60px;height:30px;line-height:30px;overflow:hidden;font-size:18px;font-weight:700;letter-spacing:1.33px;color:#000;padding-left:1.500px;font-family:'Liberation Serif','Noto Serif CJK SC',serif">1. 1. 1.</div>
<div class="t" style="left:1469.5px;top:102px;width:72px;text-align:center;font-size:12px;color:#555">标题 4</div>
<div class="a" style="left:1547px;top:75px;width:60px;height:30px;line-height:30px;overflow:hidden;font-size:14.8px;font-weight:700;letter-spacing:1.2px;color:#000;padding-left:1px;font-family:'Liberation Serif','Noto Serif CJK SC',serif">1. 1. 1. 1</div>
<div class="t" style="left:1541.5px;top:102px;width:72px;text-align:center;font-size:12px;color:#555">标题 5</div>
<svg style="left:1662px;top:69px" width="13" height="13" viewBox="0 0 13 13" fill="none" stroke="#3b78c3" stroke-width="1.700"><circle cx="8.500" cy="5" r="3.600"/><path d="M5.800 7.700l-4.600 4.600" stroke-width="2.200"/></svg>
<div class="t rl" style="left:1680px;top:66px">查找</div>
<svg style="left:1719.5px;top:75px" width="6" height="4" viewBox="0 0 6 4" fill="none" stroke="#444" stroke-width="1.200"><path d="M0.400 0.500l2.600 2.600l2.600-2.600"/></svg>
<svg style="left:1660px;top:90px" width="18" height="17" viewBox="0 0 18 17"><text x="0.500" y="8.300" font-family="Liberation Sans,sans-serif" font-size="10" fill="#555">a<tspan fill="#8e44ad">b</tspan></text><text x="5.800" y="16" font-family="Liberation Sans,sans-serif" font-size="10" fill="#3b78c3">ac</text><path d="M1.500 10.500v2.500h3 M3 11.500l1.700 1.500l-1.700 1.500" fill="none" stroke="#3b78c3" stroke-width="1.100"/></svg>
<div class="t rl" style="left:1680px;top:89px">替换</div>
<svg style="left:1664px;top:114px" width="10" height="15" viewBox="0 0 10 15"><path d="M1 1v11l3-2.500l2 4.500l1.500-0.700l-2-4.300h3.500z" fill="#fff" stroke="#555" stroke-width="1"/></svg>
<div class="t rl" style="left:1680px;top:112px">选择</div>
<svg style="left:1709.5px;top:121px" width="6" height="4" viewBox="0 0 6 4" fill="none" stroke="#444" stroke-width="1.200"><path d="M0.400 0.500l2.600 2.600l2.600-2.600"/></svg>
<div class="a" style="left:1766px;top:78px;width:10px;height:10px;border-radius:5px;background:#f7941d"></div>
<div class="t rl" style="left:1752px;top:99px;width:40px;text-align:center">加</div>
<div class="t rl" style="left:1752px;top:114px;width:40px;text-align:center">载项</div><div class="a" style="left:329px;top:159px;width:1px;height:855px;background:#c6c6c6"></div>
<div class="t" style="left:-6px;top:170px;font-size:20.500px;line-height:30px;height:26px;color:#444">导航</div>
<svg style="left:257px;top:176px" width="15" height="9" viewBox="0 0 15 9" fill="none" stroke="#444" stroke-width="1.100"><path d="M1 1l6.500 6.500l6.500-6.500"/></svg>
<svg style="left:300.500px;top:174.500px" width="11" height="11" viewBox="0 0 12 12" fill="none" stroke="#444" stroke-width="1.100"><path d="M0.500 0.500l11 11 M11.500 0.500l-11 11"/></svg>
<div class="a" style="left:-4px;top:213px;width:315px;height:26px;background:#fff;border:1px solid #ababab"></div>
<div class="t nav" style="left:2px;top:214px">联合体</div>
<svg style="left:285px;top:221px" width="9" height="9" viewBox="0 0 9 9" fill="none" stroke="#444" stroke-width="1.800"><path d="M0.500 0.500l8 8 M8.500 0.500l-8 8"/></svg>
<svg style="left:301px;top:224px" width="6" height="4" viewBox="0 0 6 4" fill="none" stroke="#444" stroke-width="1.100"><path d="M0.500 0.500l2.500 2.500l2.500-2.500"/></svg>
<div class="t nav" style="left:-2px;top:248px">无匹配项</div>
<div class="t nav" style="left:-4px;top:277px;color:#2b579a;font-weight:700">标题</div>
<div class="a" style="left:0;top:301px;width:20px;height:3px;background:#2b579a"></div>
<div class="t nav" style="left:44px;top:277px">页面</div>
<div class="t nav" style="left:93px;top:277px">结果</div>
<div class="a" style="left:9px;top:309px;width:290px;height:18px;background:#fff;border:1px solid #c8c8c8"></div>
<svg style="left:150px;top:315px" width="7" height="7" viewBox="0 0 7 7"><path d="M0 0.500h7" stroke="#444" stroke-width="1"/><path d="M3.500 2l3.500 4.500h-7z" fill="#444"/></svg>
<svg style="left:-1px;top:333px" width="7" height="7" viewBox="0 0 7 7"><path d="M6.500 0.500v6h-6z" fill="#444"/></svg>
<div class="t nav" style="left:15px;top:326px">1 资格证明材料</div>
<div class="t nav" style="left:31px;top:347px">1.1 营业执照</div>
<div class="t nav" style="left:31px;top:368px">1.2 法定代表人（或非法人组织负责人）身份证...</div>
<div class="t nav" style="left:31px;top:389px">1.3 法定代表人（或非法人组织负责人）授权委...</div>
<div class="t nav" style="left:31px;top:410px">1.4 良好的商业信誉和健全的财务会计制度的承...</div>
<div class="t nav" style="left:31px;top:431px">1.5 依法缴纳税收</div>
<div class="t nav" style="left:31px;top:452px">1.6 依法缴纳社会保障资金</div>
<div class="t nav" style="left:31px;top:473px">1.7 履行合同所必需的设备和专业技术能力声明函</div>
<div class="t nav" style="left:31px;top:494px">1.8 参加政府采购活动前3年内在经营活动中没...</div>
<svg style="left:15px;top:522px" width="7" height="7" viewBox="0 0 7 7"><path d="M6.500 0.500v6h-6z" fill="#444"/></svg>
<div class="t nav" style="left:31px;top:515px">1.9 信用记录</div>
<div class="t nav" style="left:63px;top:536px">1.9.1.1 信用中国</div>
<div class="t nav" style="left:63px;top:557px">1.9.1.2 中国政府采购网</div>
<div class="t nav" style="left:31px;top:578px">1.10 医疗器械经营许可证</div>
<svg style="left:15px;top:606px" width="7" height="7" viewBox="0 0 7 7"><path d="M6.500 0.500v6h-6z" fill="#444"/></svg>
<div class="t nav" style="left:31px;top:599px">1.11 资格要求响应资料</div>
<div class="t nav" style="left:47px;top:620px">1.11.1 满足《中华人民共和国政府采购法》...</div>
<div class="t nav" style="left:47px;top:641px">1.11.2 落实政府采购政策需满足的资格要求</div>
<div class="t nav" style="left:47px;top:662px">1.11.3 医疗器械经营许可证</div>
<svg style="left:-1px;top:690px" width="7" height="7" viewBox="0 0 7 7"><path d="M6.500 0.500v6h-6z" fill="#444"/></svg>
<div class="t nav" style="left:15px;top:683px">2 符合性证明材料</div>
<div class="t nav" style="left:31px;top:704px">2.1 投标函</div>
<div class="t nav" style="left:31px;top:725px">2.2 投标保证金</div>
<div class="t nav" style="left:31px;top:746px">2.3 开标一览表</div>
<div class="t nav" style="left:31px;top:767px">2.4 分项报价表</div>
<div class="t nav" style="left:31px;top:788px">2.5 技术规格偏离表</div>
<div class="a" style="left:26px;top:810px;width:272px;height:20px;background:#c2d6f3"></div>
<div class="t nav" style="left:31px;top:809px">2.6 商务条款偏离表</div>
<div class="t nav" style="left:31px;top:830px">2.7 投标人关联单位说明</div>
<svg style="left:15px;top:858px" width="7" height="7" viewBox="0 0 7 7"><path d="M6.500 0.500v6h-6z" fill="#444"/></svg>
<div class="t nav" style="left:31px;top:851px">2.8 其他符合性证明材料</div>
<svg style="left:32px;top:878px" width="6" height="9" viewBox="0 0 6 9"><path d="M0.500 0.700l4.500 3.800l-4.500 3.800z" fill="none" stroke="#777" stroke-width="1"/></svg>
<div class="t nav" style="left:47px;top:872px">2.8.1 技术白皮书</div>
<svg style="left:32px;top:899px" width="6" height="9" viewBox="0 0 6 9"><path d="M0.500 0.700l4.500 3.800l-4.500 3.800z" fill="none" stroke="#777" stroke-width="1"/></svg>
<div class="t nav" style="left:47px;top:893px">2.8.2 线圈白皮书</div>
<div class="t nav" style="left:47px;top:914px">2.8.3 AIR Recon DL 白皮书</div>
<svg style="left:32px;top:941px" width="6" height="9" viewBox="0 0 6 9"><path d="M0.500 0.700l4.500 3.800l-4.500 3.800z" fill="none" stroke="#777" stroke-width="1"/></svg>
<div class="t nav" style="left:47px;top:935px">2.8.4 工作站白皮书</div>
<div class="t nav" style="left:47px;top:956px">2.8.5 产品彩页等文字资料</div>
<div class="t nav" style="left:47px;top:977px">2.8.6 中华人民共和国医疗器械注册证</div>
<div class="a" style="left:0;top:1016px;width:1807px;height:22px;background:#f3f3f3;border-top:1px solid #c8c8c8"></div>
<div class="t" style="left:-5px;top:1017px;font-size:12px;color:#444">第 69 页，共 244 页</div>
<div class="t" style="left:122px;top:1017px;font-size:12px;color:#444">7/29057 个字</div>
<svg style="left:216px;top:1020px" width="16" height="13" viewBox="0 0 16 13" fill="none" stroke="#666" stroke-width="1"><path d="M6.500 2v10 M6.500 2c-2-1.500-4-1.500-6-1v10c2-0.500 4-0.500 6 1 M6.500 2c1-1 2-1.200 3-1.200"/><path d="M10 3l4.500 5 M14.500 3l-4.500 5"/></svg>
<div class="t" style="left:248px;top:1017px;font-size:12px;color:#444">简体中文(中国大陆)</div>
<div class="t" style="left:370px;top:1017px;font-size:12px;color:#444">修订: 关闭</div>
<svg style="left:443px;top:1020px" width="17" height="14" viewBox="0 0 17 14" fill="none" stroke="#555" stroke-width="1.100"><path d="M8 1.200a5.500 5.500 0 1 0 2 9.500"/><path d="M5.500 3v4l2.500 1.500"/><path d="M10 7l5.500 5.500 M15.500 7l-5.500 5.500" stroke="#333" stroke-width="1.600"/></svg>
<div class="t" style="left:463px;top:1017px;font-size:12px;color:#333;font-weight:700">辅助功能: 调查</div>
<div class="a" style="left:1771px;top:1017px;width:36px;height:21px;background:#c6c6c6"></div>
<svg style="left:1744px;top:1020px" width="14" height="14" viewBox="0 0 14 14" fill="none" stroke="#666" stroke-width="1" shape-rendering="crispEdges"><path d="M0.500 0.500h5.500v10.500h-5.500z M7.500 0.500h5.500v10.500h-5.500z"/><path d="M2 2.500h3 M2 4.500h3 M2 6.500h3 M2 8.500h3 M8.500 2.500h3 M8.500 4.500h3 M8.500 6.500h3 M8.500 8.500h3 M6.500 0.500v11.500"/><path d="M5 10.500l1.700 2.500l1.700-2.500" shape-rendering="auto"/></svg>
<svg style="left:1784px;top:1020px" width="14" height="13" viewBox="0 0 14 13" fill="none" stroke="#666" stroke-width="1" shape-rendering="crispEdges"><path d="M0.500 0.500h13v12h-13z"/><path d="M2 2.500h10 M2 4.500h10 M2 6.500h10 M2 8.500h10 M2 10.500h10"/></svg>
<div class="a" style="left:0;top:1038px;width:1807px;height:9px;background:#1d2c36"></div>
<div class="a" style="left:814px;top:1038px;width:48px;height:9px;background:#a9632e"></div>
<div class="a" style="left:1107px;top:1038px;width:48px;height:9px;background:#4d5861"></div>
<div class="a" style="left:94px;top:1045.500px;width:17px;height:2px;background:#8a939a;border-radius:2px 2px 0 0"></div>
<div class="a" style="left:240px;top:1045.500px;width:20px;height:2px;background:#e8e8e8;border-radius:2px 2px 0 0"></div>
<div class="a" style="left:288px;top:1045.500px;width:21px;height:2px;background:#1e88d8;border-radius:2px 2px 0 0"></div>
<div class="a" style="left:490px;top:1045.500px;width:7px;height:2px;background:#7ec636;border-radius:2px 2px 0 0"></div>
<div class="a" style="left:536px;top:1045.500px;width:16px;height:2px;background:#1f6f7a;border-radius:2px 2px 0 0"></div>
<div class="a" style="left:588px;top:1045.500px;width:9px;height:2px;background:#c98a2a;border-radius:2px 2px 0 0"></div>
<div class="a" style="left:633px;top:1045.500px;width:18px;height:2px;background:#19b36b;border-radius:2px 2px 0 0"></div>
<div class="a" style="left:681px;top:1045.500px;width:20px;height:2px;background:#e8e8e8;border-radius:2px 2px 0 0"></div>
<div class="a" style="left:736px;top:1045.500px;width:6px;height:2px;background:#d8dde0;border-radius:2px 2px 0 0"></div>
<div class="a" style="left:974px;top:1045.500px;width:21px;height:2px;background:#7a2a2a;border-radius:2px 2px 0 0"></div>
<div class="a" style="left:1218px;top:1045.500px;width:23px;height:2px;background:#8b5060;border-radius:2px 2px 0 0"></div>
<div class="a" style="left:1268px;top:1045.500px;width:21px;height:2px;background:#2a86e0;border-radius:2px 2px 0 0"></div></body></html>
